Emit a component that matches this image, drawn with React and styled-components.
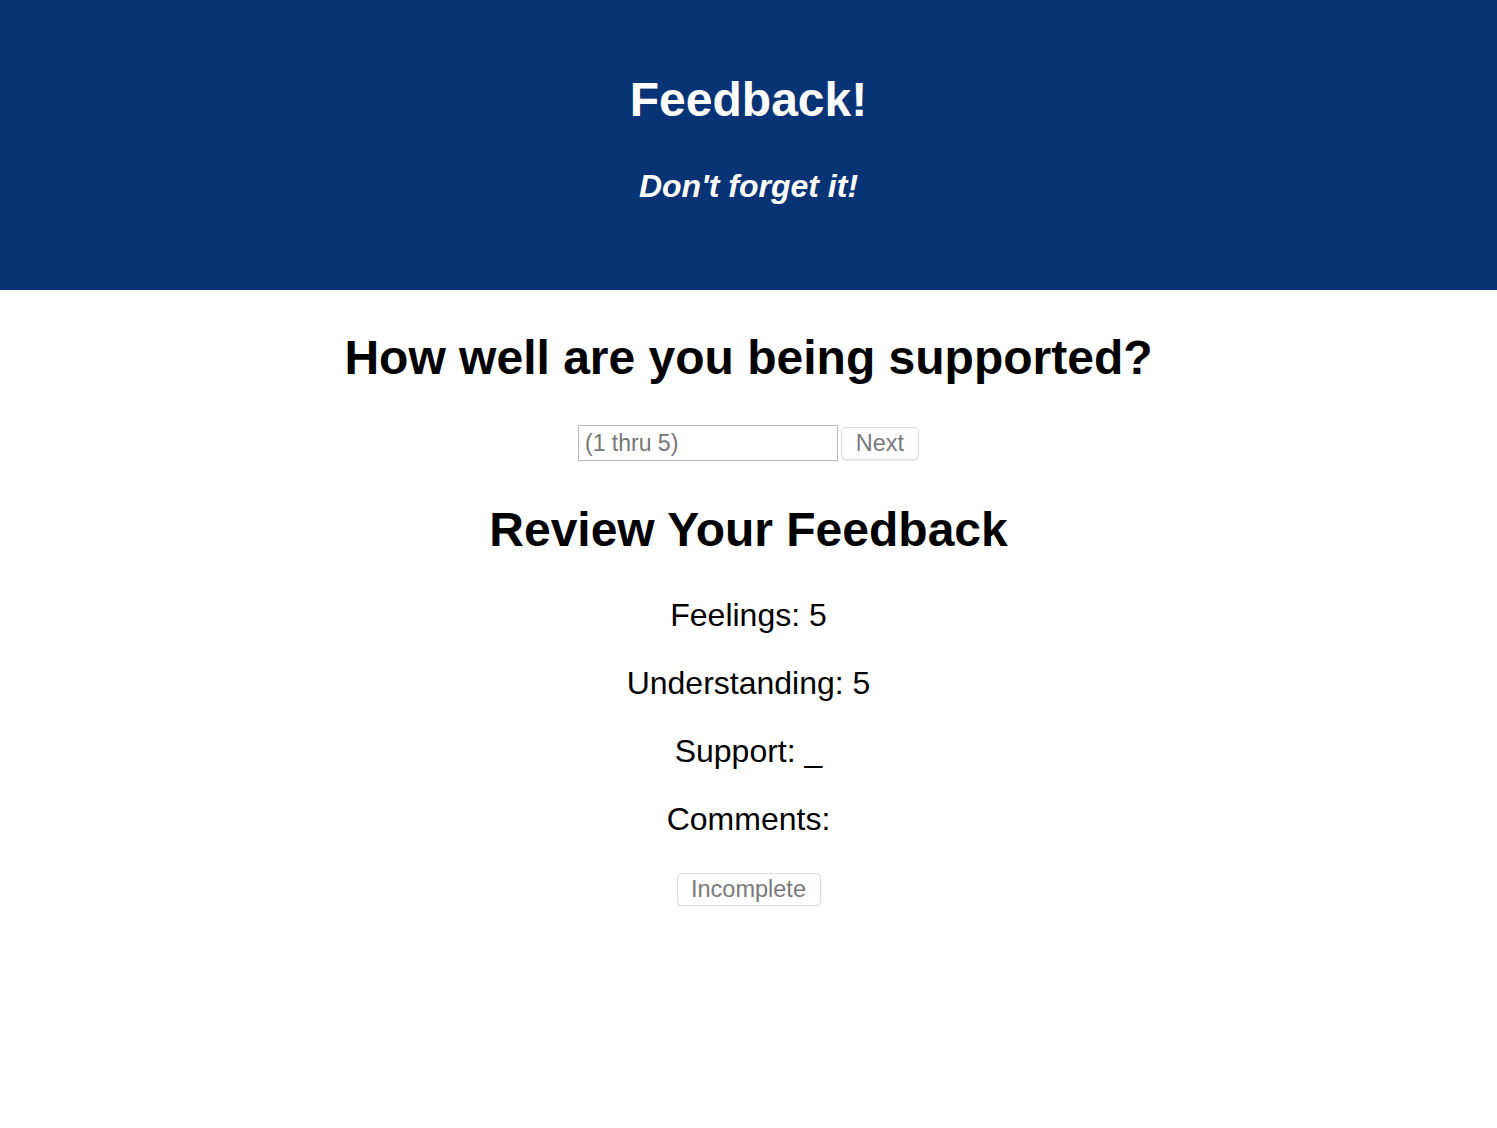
import React from 'react';
import styled, { createGlobalStyle } from 'styled-components';

const GlobalStyle = createGlobalStyle`
	html, body {
		margin: 0;
		padding: 0;
		background: #ffffff;
		font-family: 'Liberation Sans', Arial, sans-serif;
		color: #000000;
	}
`;

const Header = styled.header`
	background: #083375;
	height: 290px;
	box-sizing: border-box;
	padding-top: 72px;
	text-align: center;
	color: #ffffff;
`;

const Title = styled.h1`
	margin: 0;
	font-size: 48px;
	line-height: 56px;
	font-weight: 700;
`;

const Subtitle = styled.h2`
	margin: 38px 0 0;
	font-size: 32px;
	line-height: 40px;
	font-weight: 700;
	font-style: italic;
`;

const Main = styled.main`
	display: flex;
	flex-direction: column;
	align-items: center;
	text-align: center;
`;

const Heading = styled.h2`
	margin: ${(p) => p.$top}px 0 0;
	font-size: 48px;
	line-height: 56px;
	font-weight: 700;
`;

const Row = styled.div`
	display: flex;
	align-items: center;
	gap: 3px;
	margin-top: 39px;
`;

const Input = styled.input`
	width: 260px;
	height: 36px;
	box-sizing: border-box;
	border: 1px solid #b8b8b8;
	padding: 0 6px;
	font-family: 'Liberation Sans', Arial, sans-serif;
	font-size: 23px;
	outline: none;

	&::placeholder {
		color: #777777;
	}
`;

const Button = styled.button`
	height: 33px;
	width: ${(p) => p.$width}px;
	box-sizing: border-box;
	margin-top: ${(p) => p.$top || 0}px;
	padding: 0;
	background: #ffffff;
	border: 1px solid #dcdcdc;
	border-radius: 5px;
	box-shadow: 0 1px 1px rgba(0, 0, 0, 0.08);
	color: #7a7a7a;
	font-family: 'Liberation Sans', Arial, sans-serif;
	font-size: 23.5px;
`;

const Review = styled.div`
	display: flex;
	flex-direction: column;
	gap: 32px;
	margin-top: 39px;
`;

const Line = styled.p`
	margin: 0;
	font-size: 32px;
	line-height: 36px;
`;

const App = () => {
	return (
		<React.Fragment>
			<GlobalStyle />
			<Header>
				<Title>Feedback!</Title>
				<Subtitle>Don't forget it!</Subtitle>
			</Header>
			<Main>
				<Heading $top={40}>How well are you being supported?</Heading>
				<Row>
					<Input type='number' placeholder='(1 thru 5)' />
					<Button $width={78}>Next</Button>
				</Row>
				<Heading $top={41}>Review Your Feedback</Heading>
				<Review>
					<Line>Feelings: 5</Line>
					<Line>Understanding: 5</Line>
					<Line>Support: _</Line>
					<Line>Comments: </Line>
				</Review>
				<Button $width={144} $top={36}>
					Incomplete
				</Button>
			</Main>
		</React.Fragment>
	);
};

export default App;
